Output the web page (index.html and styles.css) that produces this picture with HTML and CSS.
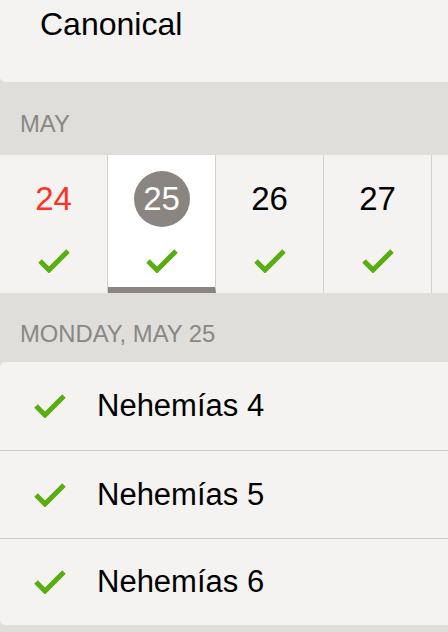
FILE: index.html
```html
<!DOCTYPE html>
<html lang="en">
<head>
    <meta charset="UTF-8">
    <meta name="viewport" content="width=device-width, initial-scale=1.0">
    <title>Reading Plan</title>
    <link rel="stylesheet" href="styles.css">
</head>
<body>
    <div class="card plan-card">
        <p class="plan-name">Canonical</p>
    </div>

    <div class="section-head month-head">MAY</div>

    <div class="days">
        <div class="day">
            <span class="day-num today">24</span>
            <svg class="check" viewBox="0 0 32 24"><polyline points="2,12 11,21 30,2"/></svg>
        </div>
        <div class="day selected">
            <span class="day-num">25</span>
            <svg class="check" viewBox="0 0 32 24"><polyline points="2,12 11,21 30,2"/></svg>
        </div>
        <div class="day">
            <span class="day-num">26</span>
            <svg class="check" viewBox="0 0 32 24"><polyline points="2,12 11,21 30,2"/></svg>
        </div>
        <div class="day">
            <span class="day-num">27</span>
            <svg class="check" viewBox="0 0 32 24"><polyline points="2,12 11,21 30,2"/></svg>
        </div>
        <div class="day"></div>
    </div>

    <div class="section-head date-head">MONDAY, MAY 25</div>

    <div class="card readings">
        <div class="reading">
            <svg class="check" viewBox="0 0 32 24"><polyline points="2,12 11,21 30,2"/></svg>
            <span>Nehemías 4</span>
        </div>
        <div class="reading">
            <svg class="check" viewBox="0 0 32 24"><polyline points="2,12 11,21 30,2"/></svg>
            <span>Nehemías 5</span>
        </div>
        <div class="reading">
            <svg class="check" viewBox="0 0 32 24"><polyline points="2,12 11,21 30,2"/></svg>
            <span>Nehemías 6</span>
        </div>
    </div>
</body>
</html>
```

FILE: styles.css
```css
* {
    box-sizing: border-box;
}
body {
    font-family: "Liberation Sans", Arial, sans-serif;
    margin: 0;
    padding: 0;
    background-color: #dfdedb;
    color: #000;
    width: 448px;
    height: 632px;
    overflow: hidden;
}
.card {
    background-color: #f4f3f1;
}
.plan-card {
    height: 82px;
    padding: 8px 0 0 40px;
    border-bottom-left-radius: 5px;
}
.plan-name {
    margin: 0;
    font-size: 32px;
    line-height: 32px;
}
.section-head {
    padding-left: 20px;
    font-size: 23.8px;
    line-height: 23px;
    color: #8a8784;
}
.month-head {
    height: 73px;
    padding-top: 30px;
}
.date-head {
    height: 69px;
    padding-top: 29px;
}
.days {
    display: flex;
    height: 138px;
    background-color: #f4f3f1;
    overflow: hidden;
}
.day {
    flex: 0 0 108px;
    height: 138px;
    border-right: 1px solid #d3d2cf;
    display: flex;
    flex-direction: column;
    align-items: center;
    padding-top: 16px;
}
.day.selected {
    background-color: #fff;
    border-bottom: 6px solid #8a8580;
}
.day-num {
    width: 56px;
    height: 56px;
    border-radius: 50%;
    display: flex;
    align-items: center;
    justify-content: center;
    font-size: 33px;
}
.day-num.today {
    color: #fa3322;
}
.selected .day-num {
    background-color: #8a8580;
    color: #fff;
}
.day .check {
    margin-top: 22px;
}
.check {
    width: 32px;
    height: 24px;
    flex: none;
}
.check polyline {
    fill: none;
    stroke: #58ad10;
    stroke-width: 5;
}
.readings {
    border-top-left-radius: 5px;
    border-bottom-left-radius: 5px;
}
.reading {
    height: 88px;
    display: flex;
    align-items: center;
    gap: 31px;
    padding-left: 34px;
    font-size: 31px;
}
.reading + .reading {
    border-top: 1px solid #cbcac8;
}
.reading:last-child {
    height: 87px;
}
```
